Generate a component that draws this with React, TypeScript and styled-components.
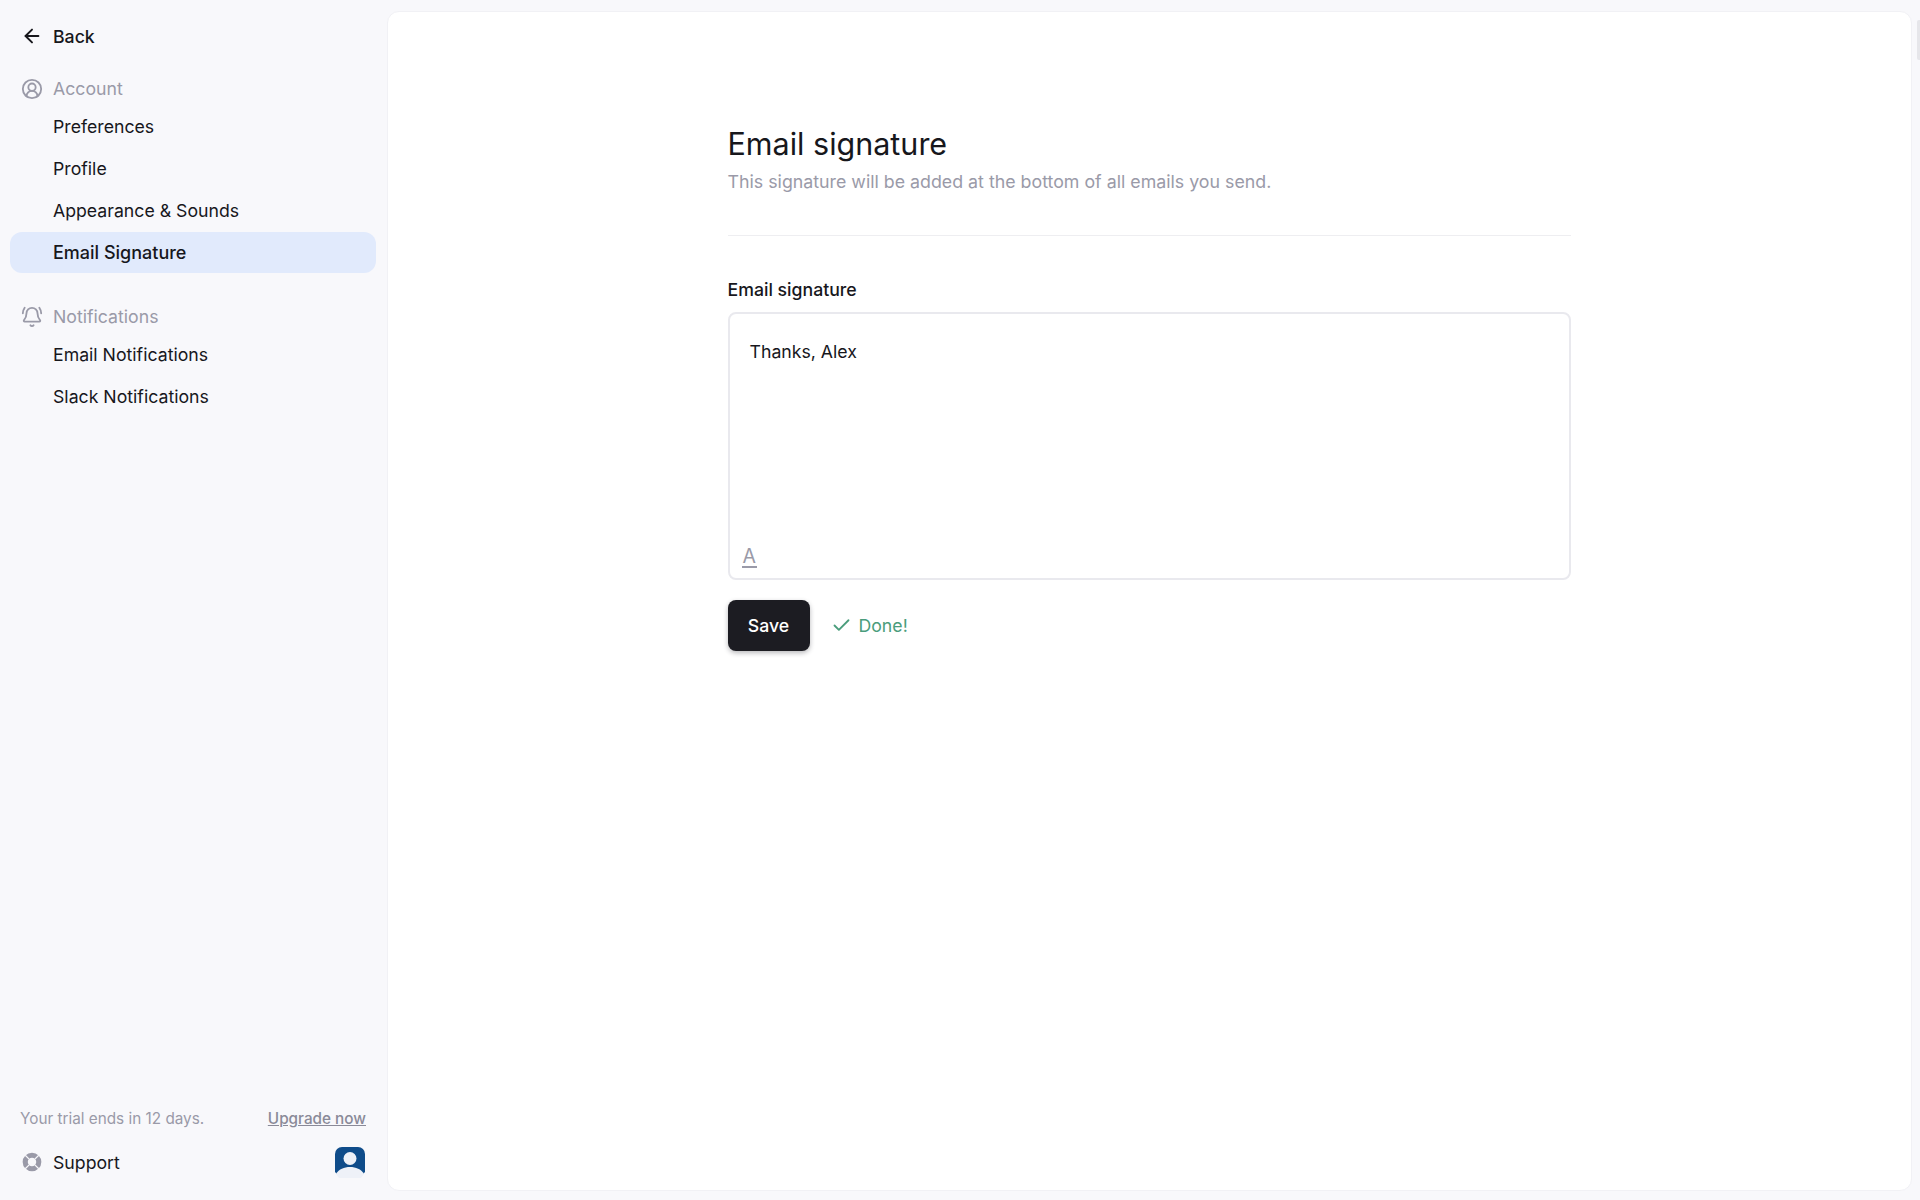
import React from "react";
import styled, { createGlobalStyle } from "styled-components";
import { ArrowLeft, BellRing, Check, CircleUserRound } from "lucide-react";

const GlobalStyle = createGlobalStyle`
  html, body {
    margin: 0;
    padding: 0;
    height: 100%;
    overflow: hidden;
  }
  body {
    background-color: #f8f8fb;
    font-family: Inter, "Liberation Sans", sans-serif;
    color: #17171c;
  }
`;

const accountLinks = ["Preferences", "Profile", "Appearance & Sounds", "Email Signature"];
const notificationLinks = ["Email Notifications", "Slack Notifications"];

const App = () => {
  return (
    <Page>
      <GlobalStyle />
      <Sidebar>
        <BackLink>
          <IconSlot>
            <ArrowLeft size={22} strokeWidth={2.1} color="#17171c" />
          </IconSlot>
          Back
        </BackLink>

        <Group>
          <GroupTitle>
            <IconSlot>
              <CircleUserRound size={22} strokeWidth={2} color="#9a9aa8" />
            </IconSlot>
            Account
          </GroupTitle>
          {accountLinks.map((link) => (
            <NavItem key={link} $active={link === "Email Signature"}>
              {link}
            </NavItem>
          ))}
        </Group>

        <Group>
          <GroupTitle>
            <IconSlot>
              <BellRing size={22} strokeWidth={2} color="#9a9aa8" />
            </IconSlot>
            Notifications
          </GroupTitle>
          {notificationLinks.map((link) => (
            <NavItem key={link}>{link}</NavItem>
          ))}
        </Group>

        <SidebarFooter>
          <TrialRow>
            <span>Your trial ends in 12 days.</span>
            <UpgradeLink>Upgrade now</UpgradeLink>
          </TrialRow>
          <SupportRow>
            <SupportLink>
              <IconSlot>
                <svg width="22" height="22" viewBox="0 0 24 24">
                  <circle cx="12" cy="12" r="7.4" fill="none" stroke="#9a9aa8" strokeWidth="5.6" />
                  <path
                    d="M4.6 4.6 8.9 8.9M19.4 4.6 15.1 8.9M4.6 19.4 8.9 15.1M19.4 19.4 15.1 15.1"
                    stroke="#f8f8fb"
                    strokeWidth="1.4"
                  />
                </svg>
              </IconSlot>
              Support
            </SupportLink>
            <Avatar>
              <svg width="32" height="32" viewBox="0 0 32 32">
                <path d="M8 1h16a7 7 0 0 1 7 7v18l-4 4H5l-4-4V8a7 7 0 0 1 7-7z" fill="#0f4c8a" />
                <circle cx="16" cy="12.5" r="6.5" fill="#eef1f8" />
                <path d="M2 28c3-5 8-7 14-7s11 2 14 7l-3 4H5z" fill="#eef1f8" />
              </svg>
            </Avatar>
          </SupportRow>
        </SidebarFooter>
      </Sidebar>

      <Panel>
        <Content>
          <Title>Email signature</Title>
          <Subtitle>This signature will be added at the bottom of all emails you send.</Subtitle>
          <Divider />
          <FieldLabel>Email signature</FieldLabel>
          <EditorBox>
            <EditorText>Thanks, Alex</EditorText>
            <FormatButton>A</FormatButton>
          </EditorBox>
          <Actions>
            <SaveButton>Save</SaveButton>
            <DoneNote>
              <Check size={21} strokeWidth={2.1} color="#4a9d7c" />
              Done!
            </DoneNote>
          </Actions>
        </Content>
      </Panel>
      <ScrollThumb />
    </Page>
  );
};

export default App;

const Page = styled.div`
  display: flex;
  width: 100%;
  height: 100vh;
  box-sizing: border-box;
  padding: 11px 8px 9px 0;
`;

const Sidebar = styled.aside`
  width: 387px;
  flex-shrink: 0;
  margin-top: -11px;
  margin-bottom: -9px;
  padding: 15px 11px 0 10px;
  box-sizing: border-box;
  display: flex;
  flex-direction: column;
`;

const IconSlot = styled.span`
  width: 43px;
  padding-left: 11px;
  box-sizing: border-box;
  display: flex;
  align-items: center;
  flex-shrink: 0;
`;

const BackLink = styled.div`
  display: flex;
  align-items: center;
  height: 42px;
  font-size: 17.7px;
  font-weight: 500;
`;

const Group = styled.div`
  margin-top: 12px;

  & + & {
    margin-top: 23px;
  }
`;

const GroupTitle = styled.div`
  display: flex;
  align-items: center;
  height: 37px;
  padding-top: 2px;
  box-sizing: border-box;
  font-size: 17.7px;
  color: #9a9aa8;
`;

const NavItem = styled.div<{ $active?: boolean }>`
  height: 41px;
  margin-bottom: 1px;
  padding-left: 43px;
  display: flex;
  align-items: center;
  font-size: ${(props) => (props.$active ? "18px" : "17.7px")};
  font-weight: ${(props) => (props.$active ? 500 : 400)};
  border-radius: 12px;
  background-color: ${(props) => (props.$active ? "#e1eafc" : "transparent")};
`;

const SidebarFooter = styled.div`
  margin-top: auto;
  padding: 0 10px 22px 0;
`;

const TrialRow = styled.div`
  display: flex;
  justify-content: space-between;
  padding-left: 10px;
  font-size: 15.3px;
  color: #9a9aa8;
`;

const UpgradeLink = styled.span`
  color: #8a8a98;
  font-weight: 500;
  text-decoration: underline;
`;

const SupportRow = styled.div`
  display: flex;
  justify-content: space-between;
  align-items: center;
  margin-top: 18px;
`;

const SupportLink = styled.div`
  display: flex;
  align-items: center;
  font-size: 17.7px;
`;

const Avatar = styled.div`
  display: flex;
  width: 32px;
  height: 32px;
`;

const Panel = styled.main`
  flex: 1;
  min-width: 0;
  padding-right: 1px;
  background-color: #ffffff;
  border: 1px solid #f1f1f5;
  border-radius: 12px;
  display: flex;
  justify-content: center;
`;

const Content = styled.div`
  width: 843px;
  padding-top: 110px;
`;

const Title = styled.h1`
  margin: 0;
  font-size: 30.5px;
  line-height: 44px;
  font-weight: 400;
  color: #17171c;
`;

const Subtitle = styled.p`
  margin: 3px 0 0;
  font-size: 17.8px;
  line-height: 26px;
  color: #9a9aa8;
`;

const Divider = styled.hr`
  margin: 40px 0 0;
  border: none;
  border-top: 1px solid #eeeef1;
`;

const FieldLabel = styled.label`
  display: block;
  margin-top: 42px;
  font-size: 17.7px;
  line-height: 24px;
  font-weight: 500;
`;

const EditorBox = styled.div`
  margin-top: 10px;
  height: 268px;
  box-sizing: border-box;
  border: 2px solid #e9e9ee;
  border-radius: 8px;
  padding: 26px 20px 0;
  display: flex;
  flex-direction: column;
  justify-content: space-between;
`;

const EditorText = styled.div`
  font-size: 17.7px;
  line-height: 24px;
`;

const FormatButton = styled.span`
  align-self: flex-start;
  margin: 0 0 10px -8px;
  padding: 0 1px;
  font-size: 19.5px;
  line-height: 19px;
  color: #9a9aa8;
  border-bottom: 2px solid #9a9aa8;
`;

const Actions = styled.div`
  display: flex;
  align-items: center;
  margin-top: 20px;
`;

const SaveButton = styled.button`
  width: 82px;
  height: 51px;
  border: none;
  border-radius: 8px;
  background-color: #1c1c22;
  color: #ffffff;
  font-family: inherit;
  font-size: 17.7px;
  font-weight: 500;
  box-shadow: 0 2px 5px rgba(20, 20, 30, 0.3);
`;

const DoneNote = styled.div`
  display: flex;
  align-items: center;
  gap: 7px;
  margin-left: 21px;
  font-size: 17.7px;
  color: #4a9d7c;
`;

const ScrollThumb = styled.div`
  position: fixed;
  top: 20px;
  right: 0;
  width: 3px;
  height: 40px;
  border-radius: 2px 0 0 2px;
  background-color: #e6e6ea;
`;
